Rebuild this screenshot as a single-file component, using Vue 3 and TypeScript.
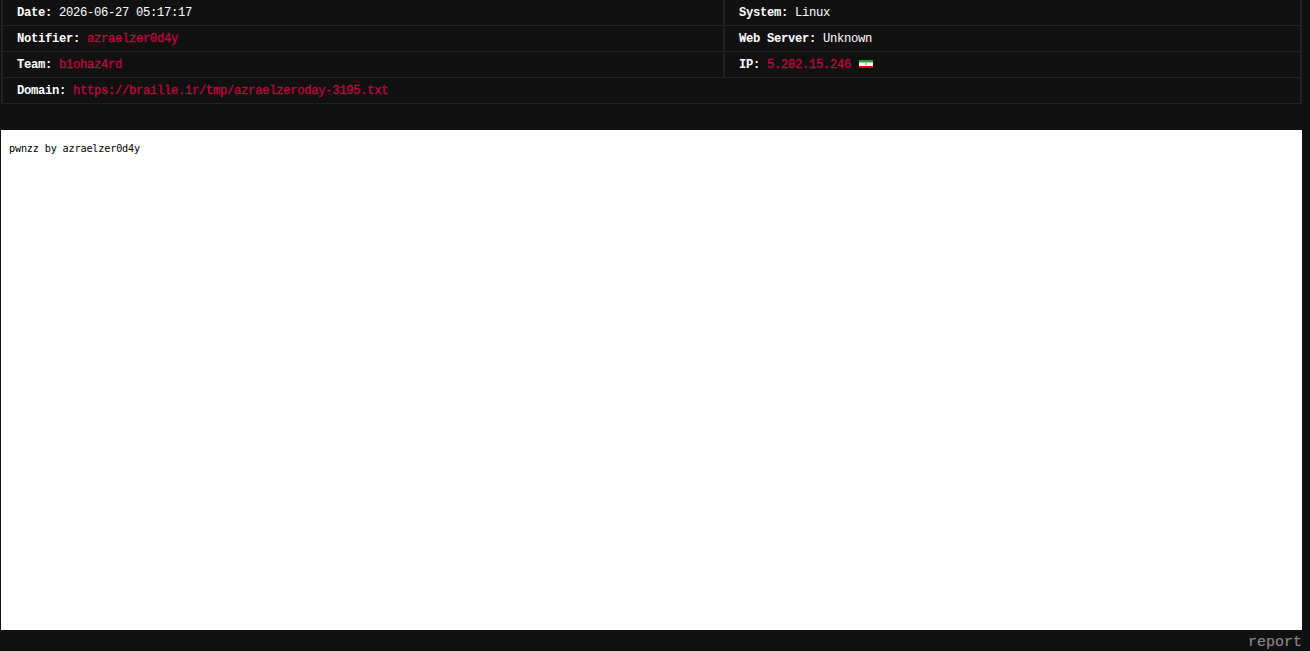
<script setup lang="ts">
interface Field {
  label: string
  value: string
  link?: boolean
  flag?: boolean
}

const rows: Field[][] = [
  [
    { label: 'Date:', value: '2026-06-27 05:17:17' },
    { label: 'System:', value: 'Linux' },
  ],
  [
    { label: 'Notifier:', value: 'azraelzer0d4y', link: true },
    { label: 'Web Server:', value: 'Unknown' },
  ],
  [
    { label: 'Team:', value: 'b1ohaz4rd', link: true },
    { label: 'IP:', value: '5.202.15.246', link: true, flag: true },
  ],
  [{ label: 'Domain:', value: 'https://braille.ir/tmp/azraelzeroday-3195.txt', link: true }],
]
</script>

<template>
  <main class="page">
    <section class="details">
      <div v-for="(row, i) in rows" :key="i" class="row">
        <div v-for="field in row" :key="field.label" class="cell">
          <strong>{{ field.label }}</strong>
          <a v-if="field.link" class="link">{{ field.value }}</a>
          <span v-else>{{ field.value }}</span>
          <svg v-if="field.flag" class="flag" width="14" height="8" viewBox="0 0 14 8" shape-rendering="crispEdges">
            <rect width="14" height="8" fill="#fff" />
            <rect width="14" height="2" fill="#249f40" />
            <rect y="2" width="14" height="1" fill="#9bd2a7" />
            <rect y="6" width="14" height="2" fill="#da0000" />
            <rect x="6" y="3" width="2" height="2" fill="#efaaa0" />
          </svg>
        </div>
      </div>
    </section>
    <pre class="mirror">pwnzz by azraelzer0d4y</pre>
    <footer class="footer"><a>report</a></footer>
  </main>
</template>

<style>
body {
  margin: 0;
  background: #111;
  overflow: hidden;
}
</style>

<style scoped>
.page {
  box-sizing: border-box;
  height: 651px;
  padding: 0 8px 0 1px;
  overflow: hidden;
  background: #111;
  color: #fff;
  font-family: "Liberation Mono", monospace;
  font-size: 12.2px;
  letter-spacing: -0.31px;
}
.details {
  box-sizing: border-box;
  height: 104px;
  border: solid #222;
  border-width: 0 2px;
}
.row {
  box-sizing: border-box;
  display: flex;
  height: 26px;
  border-bottom: 1px solid #222;
}
.cell {
  box-sizing: border-box;
  display: flex;
  flex: 1;
  align-items: center;
  gap: 7px;
  padding: 2px 14px 0;
  line-height: 15px;
  white-space: nowrap;
}
.row .cell:first-child:not(:last-child) {
  flex: 0 0 720px;
}
.cell + .cell {
  border-left: 2px solid #222;
}
.link {
  color: #b9083a;
  -webkit-text-stroke: 0.4px #b9083a;
}
.flag {
  display: block;
  margin: 0 0 4px 1px;
}
.mirror {
  box-sizing: border-box;
  height: 500px;
  margin: 26px 0 0;
  padding: 12px 8px;
  background: #fff;
  color: #000;
  font: 10.2px/13px "DejaVu Sans Mono", monospace;
  letter-spacing: -0.18px;
}
.footer {
  display: flex;
  justify-content: flex-end;
  padding-top: 5px;
  color: #888;
  font-size: 15px;
  letter-spacing: 0;
  line-height: 16px;
}
.footer a {
  -webkit-text-stroke: 0.2px #888;
}
</style>
